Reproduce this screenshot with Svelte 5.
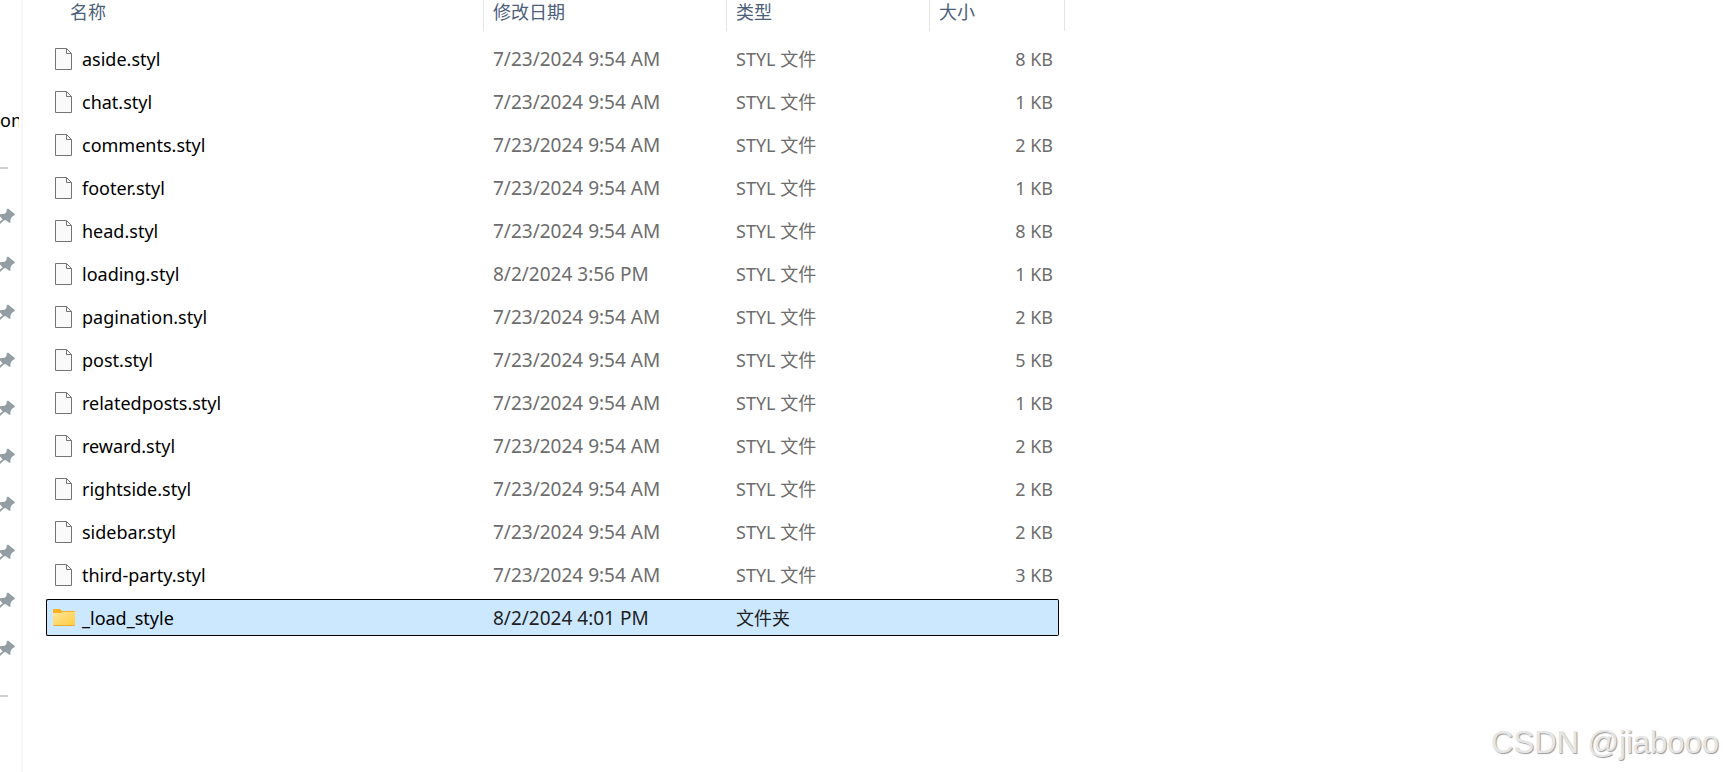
<script>
  const pinned = Array.from({ length: 10 }, (_, i) => i + 1)

  const styl = (name, size, date = '7/23/2024 9:54 AM') => ({ name, date, type: 'STYL 文件', size: `${size} KB` })

  const files = [
    styl('aside.styl', 8),
    styl('chat.styl', 1),
    styl('comments.styl', 2),
    styl('footer.styl', 1),
    styl('head.styl', 8),
    styl('loading.styl', 1, '8/2/2024 3:56 PM'),
    styl('pagination.styl', 2),
    styl('post.styl', 5),
    styl('relatedposts.styl', 1),
    styl('reward.styl', 2),
    styl('rightside.styl', 2),
    styl('sidebar.styl', 2),
    styl('third-party.styl', 3),
    { name: '_load_style', date: '8/2/2024 4:01 PM', type: '文件夹', size: '', folder: true },
  ]

  let selected = $state('_load_style')
</script>

<div class="explorer">
  <nav class="sidebar">
    <span class="label">on</span>
    <hr />
    {#each pinned as id (id)}
      <span class="slot">
        <svg class="pin" width="15" height="16" viewBox="0 0 15 16" aria-hidden="true">
          <path d="M8 .5L14.800 6L14.500 7.300L12 8.700L10.500 11.300V14.700H9.300L6 12.300H4L0 16V13.500L2.700 11.300L0 8.500V6.300L4.700 5.700L6.300 4.300L6.800 1.500Z" fill="#929da4" />
        </svg>
      </span>
    {/each}
    <hr />
  </nav>

  <main>
    <table>
      <colgroup>
        <col class="col-name" />
        <col class="col-date" />
        <col class="col-type" />
        <col class="col-size" />
        <col class="col-tail" />
      </colgroup>
      <thead>
        <tr>
          <th class="name"><div>名称</div></th>
          <th><div>修改日期</div></th>
          <th><div>类型</div></th>
          <th colspan="2"><div>大小</div></th>
        </tr>
      </thead>
      <tbody>
        {#each files as file (file.name)}
          <tr class:selected={selected === file.name} onclick={() => (selected = file.name)}>
            <td class="name">
              <div class="file">
                {#if file.folder}
                  <svg width="22" height="17" viewBox="0 0 22 17" aria-hidden="true">
                    <defs>
                      <linearGradient id="folder" x1="0" y1="0" x2="1" y2="1">
                        <stop offset="0" stop-color="#ffe69c" />
                        <stop offset="1" stop-color="#ffcb3d" />
                      </linearGradient>
                    </defs>
                    <path d="M0 1Q0 0 1 0H7L9 2H21Q22 2 22 3V6H0Z" fill="#f9b21d" />
                    <path d="M0 4H8L9 3H22V16Q22 17 21 17H1Q0 17 0 16Z" fill="url(#folder)" />
                    <path d="M0 16H22Q22 17 21 17H1Q0 17 0 16Z" fill="#e8ab2c" />
                  </svg>
                {:else}
                  <svg width="22" height="22" viewBox="0 0 22 22" aria-hidden="true">
                    <path d="M2.500 .5H13.500L18.500 5.500V21.500H2.500Z" fill="#fafafa" stroke="#747474" />
                    <path d="M13.500 .5V5.500H18.500" fill="none" stroke="#747474" />
                  </svg>
                {/if}
                <span>{file.name}</span>
              </div>
            </td>
            <td class="date">{file.date}</td>
            <td>{file.type}</td>
            <td class="size">{file.size}</td>
          </tr>
        {/each}
      </tbody>
    </table>
  </main>

  <div class="watermark">CSDN @jiabooo</div>
</div>

<style>
  :global(body) {
    margin: 0;
    background: #fff;
  }
  .explorer {
    display: flex;
    min-height: 100vh;
    font: 18px/24px 'Noto Sans', 'Noto Sans CJK SC', sans-serif;
    color: #000;
  }
  .sidebar {
    box-sizing: border-box;
    flex: none;
    width: 23px;
    padding: 96px 2px 0 0;
    border-right: 2px solid #f6f6f6;
  }
  .label,
  .slot {
    display: flex;
    align-items: center;
    height: 48px;
    overflow: hidden;
  }
  hr {
    width: 8px;
    height: 2px;
    margin: 23px 0;
    border: 0;
    background: #d2d2d2;
  }
  main {
    flex: 1;
    min-width: 0;
    padding-left: 23px;
  }
  table {
    width: 1019px;
    margin-top: -6px;
    table-layout: fixed;
    border-spacing: 0 6px;
  }
  .col-name {
    width: 438px;
  }
  .col-date {
    width: 243px;
  }
  .col-type {
    width: 203px;
  }
  .col-size {
    width: 129px;
  }
  .col-tail {
    width: 6px;
  }
  th {
    padding: 0 0 3px;
    font-weight: 400;
    text-align: left;
    color: #4c607a;
  }
  th div {
    box-sizing: border-box;
    height: 31px;
    padding-left: 9px;
    border-right: 1px solid #e5e5e5;
  }
  th.name div {
    padding-left: 24px;
  }
  td {
    box-sizing: border-box;
    height: 37px;
    padding: 0 0 0 9px;
    border: 1px solid transparent;
    border-width: 1px 0;
    color: #6d6d6d;
    white-space: nowrap;
  }
  td.name {
    padding-left: 6px;
    border-left-width: 1px;
    color: #000;
  }
  td.date {
    font-size: 19px;
  }
  td.size {
    padding: 0 5px 0 0;
    border-right-width: 1px;
    text-align: right;
  }
  .file {
    display: flex;
    align-items: center;
    gap: 7px;
  }
  .selected td {
    background: #cce8ff;
    border-color: #000;
    color: #1f1f1f;
  }
  .selected td.name {
    border-radius: 2px 0 0 2px;
    color: #000;
  }
  .selected td.size {
    border-radius: 0 2px 2px 0;
  }
  .watermark {
    position: absolute;
    right: 4px;
    bottom: 5px;
    font: 31px/48px 'Liberation Sans', sans-serif;
    color: #e6e6e6;
    text-shadow: 1px 1px 1px #999;
  }
</style>
